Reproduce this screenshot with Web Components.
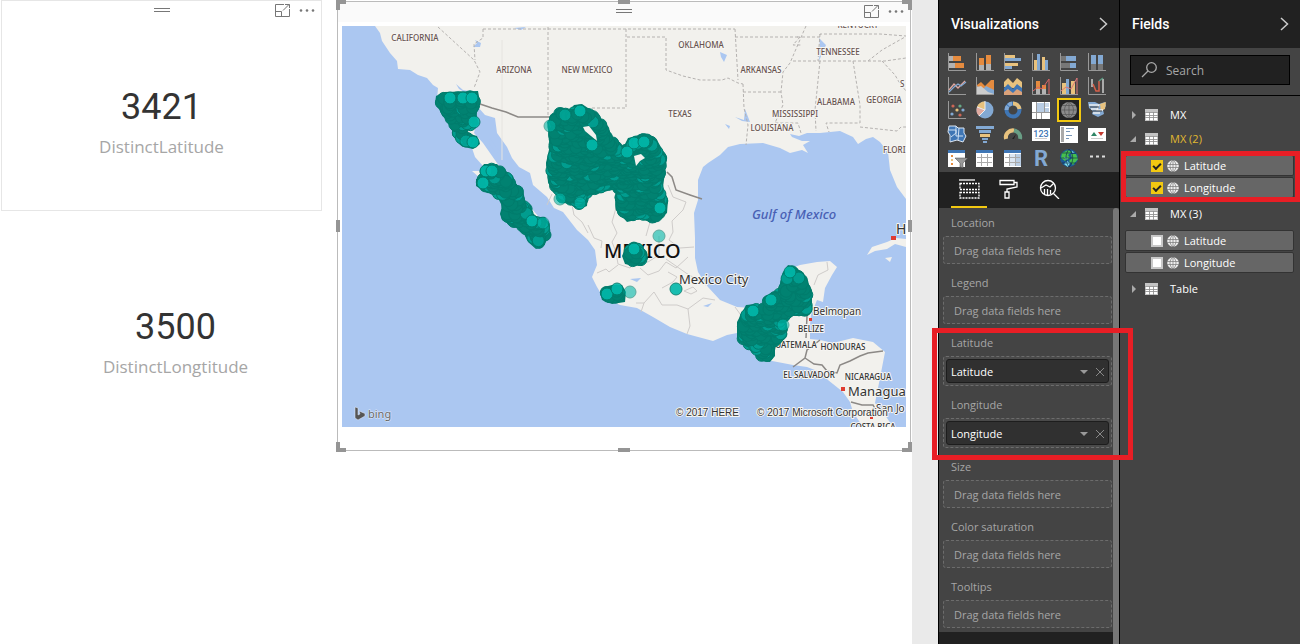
<!DOCTYPE html>
<html lang="en">
<head>
<meta charset="utf-8">
<title>Report</title>
<style>
body { margin: 0; font-family: "Open Sans", "Noto Sans", sans-serif; font-size: 11px; line-height: 16px; }
</style>
</head>
<body>
<report-app></report-app>
<script>
const define = (name, html, setup) => customElements.define(name, class extends HTMLElement {
  connectedCallback() {
    if (this.shadowRoot) return;
    const root = this.attachShadow({ mode: 'open' });
    const template = document.createElement('template');
    template.innerHTML = html;
    root.append(template.content.cloneNode(true));
    if (setup) setup.call(this, root);
  }
});

/* ---------- visual toolbar ---------- */
define('visual-header', `
<style>
:host { display: grid; grid-template-columns: 1fr auto 1fr; align-items: center; box-sizing: border-box; height: 20px; padding-bottom: 2px; }
button { border: 0; padding: 0; background: none; display: block; color: #777; }
.grip { grid-column: 2; }
.tools { display: flex; justify-content: flex-end; gap: 9px; padding-right: 6px; }
svg { display: block; fill: none; stroke: currentColor; }
</style>
<button class="grip" aria-label="Move visual"><svg width="16" height="6"><path d="M0 1.5H16M0 4.5H16"/></svg></button>
<div class="tools">
  <button aria-label="Focus mode"><svg width="15" height="13" viewBox="0 0 15 13"><path d="M9 .5H.5V12.5H14.5V5M.5 7.5H6.5V12.5M8 6.5L14 .5M10 .5H14.5V4"/></svg></button>
  <button aria-label="More options"><svg width="16" height="13" viewBox="0 0 16 13"><g fill="currentColor" stroke="none"><circle cx="2" cy="6.500" r="1.300"/><circle cx="8" cy="6.500" r="1.300"/><circle cx="14" cy="6.500" r="1.300"/></g></svg></button>
</div>`);

/* ---------- card visual ---------- */
define('card-visual', `
<style>
:host { display: block; box-sizing: border-box; height: 211px; border: 1px solid #e6e6e6; text-align: center; }
:host([plain]) { border-color: transparent; }
:host([plain]) visual-header { visibility: hidden; }
.value { margin-top: 65px; font: 36px/42px Roboto, sans-serif; color: #333; }
.label { margin-top: 7px; font-size: 17px; line-height: 24px; color: #a6a6a6; }
</style>
<visual-header></visual-header>
<div class="value"><slot name="value"></slot></div>
<div class="label"><slot></slot></div>`);

/* ---------- map visual ---------- */
const clusters = [
  [[436,96],[444,92],[478,91],[480,102],[476,115],[479,124],[472,130],[464,129],[463,132],[477,136],[480,144],[473,149],[464,147],[455,139],[450,125],[442,114],[435,103]],
  [[480,170],[484,164],[497,164],[502,169],[513,176],[516,184],[523,190],[525,200],[532,210],[534,217],[545,217],[549,223],[550,235],[544,245],[536,249],[528,242],[522,230],[512,226],[502,220],[500,214],[502,206],[496,194],[487,193],[476,186],[476,179],[483,176]],
  [[547,122],[556,112],[560,108],[570,110],[574,105],[582,104],[597,114],[607,125],[612,137],[623,148],[628,138],[645,134],[657,140],[667,158],[663,187],[668,200],[667,213],[655,223],[640,219],[627,222],[616,210],[615,200],[618,188],[597,194],[588,195],[587,206],[579,209],[568,203],[560,202],[548,182],[546,163],[550,145]],
  [[622,256],[625,249],[630,243],[639,243],[647,252],[648,259],[641,265],[634,266],[625,264]],
  [[600,293],[604,287],[612,285],[622,285],[626,292],[625,302],[612,304],[602,300]],
  [[783,273],[788,265],[797,268],[804,275],[812,290],[812,310],[805,316],[790,316],[786,320],[788,330],[784,338],[775,345],[775,356],[770,362],[762,361],[737,338],[737,322],[746,305],[757,304],[763,310],[763,298],[778,291]]
];
/* third value marks an isolated, see-through point */
const bright = [[450,98],[463,98],[472,98],[474,122],[466,141,1],[473,142],[486,171],[492,171],[483,183],[532,221],[543,223,1],[565,115,1],[580,111],[550,126,1],[560,199,1],[580,203,1],[592,145],[627,152],[634,143],[644,142],[660,208],[634,249],[607,294],[617,289],[630,292,1],[676,289],[659,236,1],[790,272],[753,311],[771,300],[783,325,1]];

const inside = (x, y, poly) => {
  let hit = false;
  for (let i = 0, j = poly.length - 1; i < poly.length; j = i++) {
    const [xi, yi] = poly[i], [xj, yj] = poly[j];
    if ((yi > y) !== (yj > y) && x < (xj - xi) * (y - yi) / (yj - yi) + xi) hit = !hit;
  }
  return hit;
};

define('map-visual', `
<style>
:host { display: block; position: relative; border: 1px solid #bbb; padding: 0 4px 23px; }
visual-header { margin: 0 -4px 4px; background: #fafafa; }
.map { display: block; width: 100%; }
i { position: absolute; box-sizing: border-box; width: 10px; height: 10px; border: 0 solid #959595; }
.nw { left: -2px; top: -2px; border-width: 4px 0 0 4px; }
.ne { right: -2px; top: -2px; border-width: 4px 4px 0 0; }
.sw { left: -2px; bottom: -2px; border-width: 0 0 4px 4px; }
.se { right: -2px; bottom: -2px; border-width: 0 4px 4px 0; }
.n, .s { left: calc(50% - 6px); width: 12px; height: 4px; border-width: 2px; }
.n { top: -2px; } .s { bottom: -2px; }
.w, .e { top: calc(50% - 6px); width: 4px; height: 12px; border-width: 2px; }
.w { left: -2px; } .e { right: -2px; }
text { font-family: "Noto Sans", "Open Sans", sans-serif; paint-order: stroke; stroke: #f6f5f2; stroke-width: 2px; stroke-linejoin: round; }
.state text { font-size: 8px; font-weight: 500; fill: #67534f; text-anchor: middle; }
.country text { font-size: 8px; font-weight: 500; fill: #333; text-anchor: middle; }
.dots circle { fill: #01b8aa; stroke: #017c6c; }
</style>
<visual-header></visual-header>
<svg class="map" viewBox="342 26 564 401" role="img" aria-label="Map of Mexico">
  <rect x="342" y="26" width="564" height="401" fill="#abc7f1"/>
  <path fill="#f2f1ed" d="M375 26L380 33L382 41L390 53L397 61L398 69L410 70L418 75L427 78L433 85L438 88L437 100L445 117L455 133L472 148L475 157L483 166L481 171L472 171L480 178L497 192L503 207L517 220L530 236L537 245L548 235L543 222L527 203L512 180L497 163L483 143L474 133L477 120L473 110L477 106L485 115L495 118L497 133L507 147L512 158L519 167L530 173L533 185L547 197L554 208L563 212L577 230L588 240L595 250L597 265L592 277L597 287L603 297L620 305L637 308L653 317L670 327L687 334L713 341L727 335L737 333L753 348L767 360L793 365L807 367L820 372L828 380L843 392L850 402L853 412L863 427H893L883 412L875 403L880 378L885 352L873 342L853 338L833 343L820 340L810 339L810 325L811 315L817 300L823 302L825 288L832 275L837 267L830 261L817 262L800 265L787 270L780 285L763 303L752 308L737 307L720 300L708 287L698 272L695 258V238L694 213L698 200V180L703 167L708 163L720 155L728 147L740 144L763 143L780 148L790 153L802 150L808 153L803 145L810 141L802 141L792 137L790 134L799 136L807 133L820 133L840 131L853 137L858 144L866 139L873 137L880 142L888 152L890 170L897 187L906 199V26Z"/>
  <path fill="#f2f1ed" d="M867 255L872 247L887 242L896 238L906 239V247L895 244L887 249L875 251ZM885 258L892 257L890 262Z"/>
  <path fill="#abc7f1" d="M456 84L463 90L469 91L466 93L459 89ZM490 138L496 147L503 154L495 152L489 143ZM475 40L481 43L480 47L473 47L477 43ZM514 28L526 27L521 30ZM720 52L727 55L724 62L721 57ZM735 117L744 120L745 109L750 122L742 121ZM819 38L826 45L822 54L819 61L820 46ZM725 124L730 126L729 129ZM630 279L641 278L637 282ZM703 306L712 303L708 307Z"/>
  <g fill="none" stroke="#b5b2b0" stroke-dasharray="3 2">
    <path d="M438 27L474 60L480 72L474 88M483 29V38L474 44L475 60M483 29H735M548 27V117M626 29V108H590M627 37H666V70L683 76L700 80L722 80L728 78L738 83L743 84M735 29L738 80M735 37H800L793 45H801M743 84L744 108L748 125L746 145M743 92H781M806 26L799 42L790 63L783 72L781 92L783 105L775 123H798L801 133M797 37H820V34H880L906 36M793 61H885L906 58M820 61L815 110L816 131M820 34L818 61M853 61L860 105V123H826L829 132M860 127L897 131L901 127L906 127M868 61L882 50L905 37M882 61L895 75L899 82L906 91"/>
  </g>
  <g fill="none" stroke="#cfccca">
    <path d="M552 194L547 205M572 205L574 215L582 222L588 233M588 225L594 238L602 241L601 248M616 208L612 222L617 233L612 242L616 252L618 264L630 268L636 260L648 262L659 255L659 236M597 273L606 269L609 272L618 265M647 205L650 222L646 236M655 223L652 210M668 185L673 197L686 202L683 210L672 221L673 232L669 240L680 248L694 247M640 268L648 275L659 271L666 262L676 268L688 257M636 303L644 303L641 312M644 303L654 292L662 305L677 305L688 309L690 326L687 334M688 309L703 298L715 300M668 272L677 277L673 282L662 288M684 291L693 287L697 291L691 294ZM735 307L743 318M827 262L828 270L818 275L814 285M666 259L686 273L706 285"/>
  </g>
  <path d="M502 40V160" stroke="#e6e4e0"/>
  <g fill="none" stroke="#8c8986" stroke-width="1.500">
    <path d="M477 103L492 108L506 112L518 117H556M667 172L672 177L676 190L690 195L702 199M807 316L806 338M820 340L807 350L805 358L793 367M805 358L814 364L822 365L827 371L837 373L840 365L850 361L860 356L868 353L883 351M851 402L862 405L873 405L877 412"/>
  </g>
  <g class="state">
    <text x="415" y="41">CALIFORNIA</text><text x="514" y="73">ARIZONA</text><text x="587" y="73">NEW MEXICO</text>
    <text x="701" y="48">OKLAHOMA</text><text x="761" y="73">ARKANSAS</text><text x="838" y="55">TENNESSEE</text>
    <text x="680" y="117">TEXAS</text><text x="795" y="117">MISSISSIPPI</text><text x="836" y="105">ALABAMA</text>
    <text x="884" y="103">GEORGIA</text><text x="772" y="131">LOUISIANA</text>
    <text x="883" y="153" style="text-anchor:start">FLORI</text><text x="900" y="87" style="text-anchor:start">S</text>
    <text x="858" y="28">KENTUCKY</text>
  </g>
  <text x="752" y="219" font-size="13" font-style="italic" font-weight="500" style="fill:#4860b4;stroke:none">Gulf of Mexico</text>
  <text x="604" y="258" font-size="20" font-weight="500" fill="#111" style="stroke-width:1px">MEXICO</text>
  <text x="679" y="284" font-size="13" fill="#333">Mexico City</text>
  <g class="country">
    <text x="811" y="332">BELIZE</text><text x="793" y="348">GUATEMALA</text><text x="843" y="350">HONDURAS</text>
    <text x="809" y="378">EL SALVADOR</text><text x="868" y="380">NICARAGUA</text><text x="873" y="430">COSTA RICA</text>
  </g>
  <text x="813" y="315" font-size="10" fill="#333">Belmopan</text>
  <text x="848" y="396" font-size="13" fill="#333">Managua</text>
  <text x="876" y="412" font-size="10" fill="#333">San Jo</text>
  <text x="896" y="234" font-size="14" fill="#333">H</text>
  <path fill="#e03c31" d="M891 236h5v4h-5zM809 318h3v3h-3zM841 387h4v4h-4zM870 416h3v3h-3z"/>
  <g class="dots"></g>
  <path fill="#555" stroke="#e8eefa" stroke-width=".5" d="M355 407L358 408V415L360 414L359 411L365 413.500V416L358 420L355 418Z"/>
  <text x="368" y="418" font-size="11" style="fill:#666;stroke:#e3ebf9;stroke-width:1px">bing</text>
  <g style="font-size:10px">
    <text x="676" y="416" style="font-family:'Liberation Sans',sans-serif;fill:#333">© 2017 HERE</text>
    <text x="757" y="416" style="font-family:'Liberation Sans',sans-serif;fill:#333">© 2017 Microsoft Corporation</text>
  </g>
</svg>
<i class="nw"></i><i class="n"></i><i class="ne"></i><i class="w"></i><i class="e"></i><i class="sw"></i><i class="s"></i><i class="se"></i>`,
function (root) {
  let seed = 7;
  const rand = () => (seed = (seed * 16807) % 2147483647) / 2147483647;
  let out = '';
  for (const poly of clusters) {
    out += `<polygon points="${poly.join(' ')}" fill="#017c6c"/>`;
    const xs = poly.map(p => p[0]), ys = poly.map(p => p[1]);
    const pts = [];
    for (let y = Math.min(...ys); y < Math.max(...ys); y += 3)
      for (let x = Math.min(...xs); x < Math.max(...xs); x += 3) {
        const px = x + rand() * 3, py = y + rand() * 3;
        if ([[5,0],[-5,0],[0,5],[0,-5]].every(([a, b]) => inside(px + a, py + b, poly))) {
          const edge = ![[9,0],[-9,0],[0,9],[0,-9]].every(([a, b]) => inside(px + a, py + b, poly));
          pts.push([px, py, edge]);
        }
      }
    pts.sort((a, b) => b[1] - a[1] + (rand() - .5) * 16);
    for (const [x, y, edge] of pts)
      out += `<circle cx="${x.toFixed(1)}" cy="${y.toFixed(1)}" r="6" style="fill:${rand() < (edge ? .35 : .06) ? '#019d8f' : '#018271'}"/>`;
  }
  out += '<path fill="#f2f1ed" d="M583 127L589 126L596 135L597 141L591 136L585 131ZM634 156L641 154L645 158L640 161L636 166Z"/>';
  for (const [x, y, light] of bright)
    out += `<circle cx="${x}" cy="${y}" r="6" opacity="${light ? .6 : .9}"/>`;
  root.querySelector('.dots').innerHTML = out;
});

/* ---------- panes ---------- */
define('side-pane', `
<style>
:host { display: flex; flex-direction: column; box-sizing: border-box; width: 181px; flex: none; background: #444; border-left: 1px solid #000; }
header { display: flex; align-items: center; justify-content: space-between; height: 48px; padding: 0 11px 0 12px; background: #212121; color: #fff; }
h2 { margin: 0; font: 500 14px/20px Roboto, sans-serif; }
button { border: 0; padding: 0; background: none; display: block; }
svg { display: block; fill: none; stroke: #ccc; stroke-width: 1.500; }
</style>
<header><h2></h2><button aria-label="Collapse"><svg width="9" height="14"><path d="M1 1L7.500 7L1 13"/></svg></button></header>
<slot></slot>`, function (root) { root.querySelector('h2').textContent = this.getAttribute('heading'); });

const axis = '<path d="M.5 0V17.500H18" fill="none" stroke="#999"/>';
const O = '#e58b3f', G = '#b3b3b3', B = '#83a9d3', Y = '#e8c27e', D = '#3f76b5';
const bar = (x, y, w, h, c) => `<rect x="${x}" y="${y}" width="${w}" height="${h}" fill="${c}"/>`;
const grid = (body = '') => bar(0, 1, 17, 17, '#fff') + body + bar(0, 1, 17, 3, D) + '<path d="M1 8.500H16M1 13.500H16M5.500 5V17M11.500 5V17" stroke="#aaa"/>';
const icons = [
  ['Stacked bar chart', axis + bar(1,3,4,5,G) + bar(5,3,8,5,O) + bar(1,10,8,5,G) + bar(7,10,9,5,O)],
  ['Stacked column chart', axis + bar(3,5,5,7,O) + bar(3,12,5,5,G) + bar(10,2,5,9,O) + bar(10,11,5,6,G)],
  ['Clustered bar chart', axis + bar(1,2,10,3,Y) + bar(1,5,16,3,B) + bar(1,10,13,3,Y) + bar(1,13,7,3,B)],
  ['Clustered column chart', axis + bar(2,7,3,10,Y) + bar(5,1,3,16,B) + bar(10,4,3,13,Y) + bar(13,7,3,10,B)],
  ['100% stacked bar chart', axis + bar(1,3,5,5,'#777') + bar(6,3,10,5,B) + bar(1,10,9,5,'#777') + bar(10,10,6,5,B)],
  ['100% stacked column chart', axis + bar(3,2,5,9,B) + bar(3,11,5,6,'#777') + bar(10,2,5,9,B) + bar(10,11,5,6,'#777')],
  ['Line chart', axis + `<path d="M1 13L6 7L10 11L17 4" fill="none" stroke="#e0a8a0" stroke-width="1.300"/><path d="M1 15L6 10L10 7L13 9L18 5" fill="none" stroke="${B}" stroke-width="1.300"/>`],
  ['Area chart', axis + `<path d="M1 17V8L5 5L9 9L15 3H18V17Z" fill="${O}"/><path d="M1 17V9L6 13L10 9L18 13V17Z" fill="${B}"/><path d="M1 17V10L5 9L12 15L18 17Z" fill="#ccc"/>`],
  ['Stacked area chart', `<path d="M0 10V5L4 1L9 6L13 1L18 5V12Z" fill="${Y}"/><path d="M0 16V11L4 7L9 12L13 7L18 11V16Z" fill="${D}"/><path d="M0 18V15L4 12L9 16L13 12L18 15V18Z" fill="#dba27a"/>`],
  ['Line and stacked column chart', axis + bar(4,4,4,8,O) + bar(4,12,4,5,G) + bar(10,8,4,4,O) + bar(10,12,4,5,G) + '<path d="M1 14L6 10L10 12L17 2V17" fill="none" stroke="#d66"/>'],
  ['Line and clustered column chart', axis + bar(2,6,4,11,Y) + bar(6,2,3,15,B) + bar(11,4,4,13,Y) + '<path d="M1 14L6 10L11 12L17 1V17" fill="none" stroke="#d77"/>'],
  ['Ribbon chart', axis + '<path d="M4 2V10M15 2V16" stroke="#ccc" stroke-width="1.500"/><path d="M5 7L8 14H11V4" fill="none" stroke="#d6604a" stroke-width="1.500"/><path d="M11 4L15 1" stroke="#5a9a80" stroke-width="1.500"/>'],
  ['Scatter chart', axis + `<circle cx="5" cy="5" r="1.600" fill="#c65"/><circle cx="12" cy="5" r="1.600" fill="#6a8"/><circle cx="9" cy="9" r="1.600" fill="${Y}"/><circle cx="4" cy="13" r="1.600" fill="${B}"/><circle cx="15" cy="9" r="1.600" fill="${B}"/><circle cx="12" cy="14" r="1.600" fill="#c65"/>`],
  ['Pie chart', `<circle cx="9" cy="9" r="8.500" fill="${B}"/><path d="M9 9V.5A8.500 8.500 0 0 0 1 6Z" fill="${Y}"/><path d="M9 9L1 6A8.500 8.500 0 0 0 3 15Z" fill="#e0aaa0"/><path d="M9 0V9L1 6M9 9L3 15" fill="none" stroke="#eee"/>`],
  ['Donut chart', `<circle cx="9" cy="9" r="6.500" fill="none" stroke="${D}" stroke-width="4"/><path d="M9 2.500A6.500 6.500 0 0 1 15.500 8" fill="none" stroke="${Y}" stroke-width="4"/><path d="M2.500 9A6.500 6.500 0 0 1 9 2.500" fill="none" stroke="${B}" stroke-width="4" stroke-dasharray="4 1"/>`],
  ['Treemap', bar(0,1,18,17,'#fff') + bar(5,2,7,9,'#b9cde4') + bar(13,2,4,4,'#cbdaeb') + bar(13,7,4,4,'#b9cde4') + '<path d="M0 11.500H18M4.500 1V18M9.500 11V18M12.500 1V11" stroke="#999"/>'],
  ['Map', '<rect x="-1" y="-1" width="20" height="20" fill="#222"/><circle cx="9" cy="9" r="8" fill="#8b8b8b"/><path d="M1 9H17M3 4.500H15M3 13.500H15M9 1V17M9 1C3 5 3 13 9 17M9 1C15 5 15 13 9 17" fill="none" stroke="#555" stroke-width=".7"/>', 1],
  ['Filled map', `<path d="M0 1H7L11 3L17 1L18 5L15 9L16 13L10 16L4 13L5 10L1 7Z" fill="${B}"/><path d="M12 3L18 1L17 8L13 10Z" fill="${Y}"/><path d="M1 4H11L9 9H15M5 12L12 12M3 8H9" fill="none" stroke="#eee" stroke-width="1.300"/><path d="M2 6H11M5 10H14" stroke="#444"/>`],
  ['Shape map', `<path d="M1 1H8L10 3H16V8L18 11L15 17L9 15L2 17V10L0 7Z" fill="${D}" stroke="#dce6f2"/><path d="M1 5H8V11H15M8 1V8L3 12M11 3L10 15" fill="none" stroke="#cfe0f2"/>`],
  ['Funnel', bar(0,1,18,3,B) + bar(3,5,12,3,B) + bar(4,9,10,3,Y) + bar(6,13,6,2,B) + bar(7,16,4,2,B)],
  ['Gauge', `<path d="M2 14A7 7 0 0 1 10 5.500" fill="none" stroke="${Y}" stroke-width="4"/><path d="M10 5.500A7 7 0 0 1 16 14" fill="none" stroke="#699e85" stroke-width="4"/><path d="M8 14L12 9L10 14Z" fill="#222"/>`],
  ['Card', bar(0,3,18,13,'#fff') + `<text x="9" y="12" text-anchor="middle" font-family="Roboto, sans-serif" font-size="9" font-weight="500" fill="${D}">123</text><path d="M3 13.500H15" stroke="#ccc"/>`],
  ['Multi-row card', bar(0,1,18,17,'#fff') + bar(1,2,3,15,'#aaa') + '<path d="M6 3.500H14M6 6.500H10M6 10.500H12M6 13.500H9" stroke="#7896b8"/>'],
  ['KPI', bar(0,3,18,13,'#fff') + '<path d="M3 11L6 7L9 11Z" fill="#2f8565"/><path d="M10 7H16L13 11Z" fill="#c43a2f"/><path d="M3 13.500H15" stroke="#ccc"/>'],
  ['Slicer', bar(0,1,17,17,'#fff') + bar(0,1,17,3,D) + bar(3,6,2,2,O) + bar(3,10,2,2,Y) + bar(3,14,2,2,O) + '<path d="M7 9H20L15 14V19L12 18V14Z" fill="#999" stroke="#444" stroke-width=".5"/>'],
  ['Table', grid()],
  ['Matrix', grid(bar(6,5,5,12,'#dce6f2') + bar(12,5,5,12,'#b9cde4'))],
  ['R script visual', `<text x="9" y="17" text-anchor="middle" font-family="Roboto, sans-serif" font-weight="700" font-size="22" fill="${B}">R</text>`],
  ['ArcGIS map', '<circle cx="9" cy="9" r="9" fill="#1c5a94"/><path d="M2 4L8 1L12 3L8 6L10 9L5 12L1 9ZM11 5L16 5L18 10L13 16L9 12L12 9Z" fill="#45c04f"/><path d="M7 12L10 14L8 18L4 15ZM12 2L15 4L12 4ZM4 8L8 9L6 11Z" fill="#7fe0f0"/><path d="M9 0C5 5 5 13 9 18M9 0C14 5 14 13 9 18M0 9H18M2 4H16M2 14H16" fill="none" stroke="#0a2240" stroke-width=".6"/>'],
  ['More visuals', '<path d="M2 7.500H5M8 7.500H11M14 7.500H17" stroke="#ddd" stroke-width="2"/>']
];

define('visual-gallery', `
<style>
:host { display: grid; grid-template-columns: repeat(6, 28px); grid-auto-rows: 24px; padding: 2px 0 2px 4px; }
button { display: grid; place-items: center; border: 0; padding: 0; background: none; }
svg { display: block; overflow: visible; }
.on svg { outline: 2px solid #f2c811; outline-offset: 1px; }
</style>`, function (root) {
  root.innerHTML += icons.map(([name, art, on]) =>
    `<button title="${name}" aria-label="${name}" class="${on ? 'on' : ''}"><svg width="18" height="18" viewBox="0 0 18 18">${art}</svg></button>`).join('');
});

define('pane-tabs', `
<style>
:host { display: flex; gap: 4px; height: 36px; padding-left: 12px; background: #212121; }
button { box-sizing: border-box; width: 36px; border: 0; border-bottom: 2px solid transparent; padding: 0; background: none; display: grid; place-items: center; }
.on { border-color: #f2c811; }
svg { display: block; fill: none; stroke: #fff; stroke-width: 1.300; }
</style>
<button class="on" aria-label="Fields"><svg width="21" height="20"><path d="M0 1H16"/><path stroke-dasharray="2 1" d="M1 4.500H20V10.500H1ZM1 13.500H20V19H1Z"/></svg></button>
<button aria-label="Format"><svg width="20" height="20"><path d="M1 1.500H15V5.500H1ZM15 3.500H18V8L8 10V13M6 13H10V19H6Z"/></svg></button>
<button aria-label="Analytics"><svg width="21" height="20"><circle cx="9" cy="9" r="7.500"/><path d="M14.500 14.500L20 20M2 9L7 6L11 8L15 4M5.500 10V15M8.500 10V16M11.500 11V15"/></svg></button>`);

define('field-well', `
<style>
:host { display: block; padding: 0 7px 4px 4px; color: #a6a6a6; }
h3 { margin: 0; padding: 7px 8px 5px; font: inherit; }
.box { position: relative; border: 1px dashed #6c6c6c; border-radius: 3px; padding: 6px 10px 4px; background: #4a4a4a; }
.box.full { padding: 2px; }
.pill { display: flex; align-items: center; gap: 7px; box-sizing: border-box; height: 24px; border: 1px solid #1d1d1d; border-radius: 3px; padding: 1px 3px 0 4px; background: #303030; color: #fff; }
.pill span { flex: 1; font-weight: 500; }
button { border: 0; padding: 0; background: none; display: block; }
svg { display: block; }
</style>
<h3></h3><div class="box"></div>`, function (root) {
  root.querySelector('h3').textContent = this.getAttribute('name');
  const box = root.querySelector('.box'), field = this.getAttribute('field');
  box.classList.toggle('full', !!field);
  box.innerHTML = field
    ? `<div class="pill"><span>${field}</span><button aria-label="Field options"><svg width="8" height="4"><path d="M0 0H8L4 4Z" fill="#999"/></svg></button><button aria-label="Remove field"><svg width="10" height="10"><path d="M1 1L9 9M9 1L1 9" stroke="#888"/></svg></button></div>`
    : 'Drag data fields here';
});

define('red-callout', `
<style>
:host { display: block; position: relative; }
div { position: absolute; z-index: 2; border: 5px solid #e81e25; inset: 0 -14px -8px -7px; pointer-events: none; }
:host([tight]) div { inset: 0 0 0 1px; }
</style><slot></slot><div></div>`);

define('well-list', `
<style>
:host { display: flex; flex: 1; }
.wells { flex: 1; min-width: 0; background: #212121; margin-right: -6px; }
.wells > div { background: #444; }
.bar { position: relative; width: 6px; background: #777; border-radius: 3px 3px 0 0; }
</style>
<div class="wells"><div><slot></slot></div></div><div class="bar"></div>`);

define('search-box', `
<style>
:host { display: block; padding: 7px 10px 10px; border-bottom: 1px solid #000; }
label { display: flex; align-items: center; gap: 8px; box-sizing: border-box; height: 30px; border: 1px solid #000; padding: 0 10px; background: #212121; }
input { flex: 1; min-width: 0; border: 0; padding: 1px 0 0; background: none; color: #fff; font: 12px/16px "Open Sans", sans-serif; outline: 0; }
input::placeholder { color: #a6a6a6; opacity: 1; }
</style>
<label><svg width="17" height="16" fill="none" stroke="#aaa" stroke-width="1.300"><circle cx="10.500" cy="5.500" r="4.800"/><path d="M7 9L1 15"/></svg><input type="search" placeholder="Search" aria-label="Search"></label>`);

define('table-row', `
<style>
:host { display: flex; align-items: center; height: 24px; padding-left: 10px; color: #fff; font-weight: 500; }
:host([active]) { color: #e0b830; }
.caret { border: 0; padding: 0; background: none; width: 9px; height: 10px; margin-right: 6px; }
.grid { margin-right: 12px; }
svg { display: block; }
</style>
<button class="caret" aria-label="Toggle table"><svg width="7" height="10"></svg></button>
<svg class="grid" width="13" height="12"><rect width="13" height="12" fill="#c4c4c4"/><path d="M1 4h3v2H1zM5 4h3v2H5zM9 4h3v2H9zM1 7h3v1H1zM5 7h3v1H5zM9 7h3v1H9zM1 9h3v2H1zM5 9h3v2H5zM9 9h3v2H9z" fill="#fff"/><path d="M0 3.500H13M0 6.500H13M0 8.500H13M4.500 3V12M8.500 3V12" stroke="#888" stroke-width=".6"/></svg>
<slot></slot>`, function (root) {
  root.querySelector('.caret svg').innerHTML = this.hasAttribute('open')
    ? '<path d="M0 8H6V2Z" fill="#aaa"/>' : '<path d="M2 1V9L6 5Z" fill="#aaa"/>';
});

define('field-items', `
<style>:host { display: flex; flex-direction: column; gap: 1px; padding: 4px 6px 4px 5px; }</style><slot></slot>`);

define('field-item', `
<style>
:host { display: block; }
label { display: flex; align-items: center; gap: 4px; box-sizing: border-box; height: 21px; border: 1px solid #333; border-radius: 2px; padding-left: 25px; background: #666; color: #fff; }
input { appearance: none; display: grid; place-items: center; box-sizing: border-box; width: 12px; height: 12px; margin: 0; border: 2px solid #c8c8c8; background: #fff; }
input:checked { background: #f2c811; border-color: #f2c811; }
input:checked::after { content: ""; width: 6px; height: 3px; border: solid #222; border-width: 0 0 2px 2px; transform: rotate(-45deg); }
svg { display: block; margin-right: 1px; }
</style>
<label><input type="checkbox"><svg width="12" height="12" fill="none" stroke="#777" stroke-width=".7"><circle cx="6" cy="6" r="5.800" fill="#eee" stroke="none"/><path d="M0 4.500H12M0 7.500H12M6 0V12M6 0C2 3 2 9 6 12C10 9 10 3 6 0"/></svg><slot></slot></label>`,
function (root) { root.querySelector('input').checked = this.hasAttribute('checked'); });

/* ---------- application ---------- */
define('report-app', `
<style>
:host { display: flex; min-height: 100vh; background: #eaeaea; }
main { flex: 1; min-width: 0; display: grid; grid-template-columns: 337fr 575fr; align-items: start; margin-right: 26px; background: #fff; }
.cards { padding: 0 15px 0 1px; }
.cards card-visual + card-visual { margin: 9px -14px 0 14px; }
map-visual { margin: 1px 1px 0 0; }
.tree { padding-top: 7px; }
</style>
<main>
  <div class="cards">
    <card-visual><span slot="value">3421</span>DistinctLatitude</card-visual>
    <card-visual plain><span slot="value">3500</span>DistinctLongtitude</card-visual>
  </div>
  <map-visual></map-visual>
</main>
<side-pane heading="Visualizations">
  <visual-gallery></visual-gallery>
  <pane-tabs></pane-tabs>
  <well-list>
    <field-well name="Location"></field-well>
    <field-well name="Legend"></field-well>
    <red-callout>
      <field-well name="Latitude" field="Latitude"></field-well>
      <field-well name="Longitude" field="Longitude"></field-well>
    </red-callout>
    <field-well name="Size"></field-well>
    <field-well name="Color saturation"></field-well>
    <field-well name="Tooltips"></field-well>
  </well-list>
</side-pane>
<side-pane heading="Fields">
  <search-box></search-box>
  <div class="tree">
    <table-row>MX</table-row>
    <table-row open active>MX (2)</table-row>
    <red-callout tight><field-items>
      <field-item checked>Latitude</field-item>
      <field-item checked>Longitude</field-item>
    </field-items></red-callout>
    <table-row open>MX (3)</table-row>
    <field-items>
      <field-item>Latitude</field-item>
      <field-item>Longitude</field-item>
    </field-items>
    <table-row>Table</table-row>
  </div>
</side-pane>`);
</script>
</body>
</html>
